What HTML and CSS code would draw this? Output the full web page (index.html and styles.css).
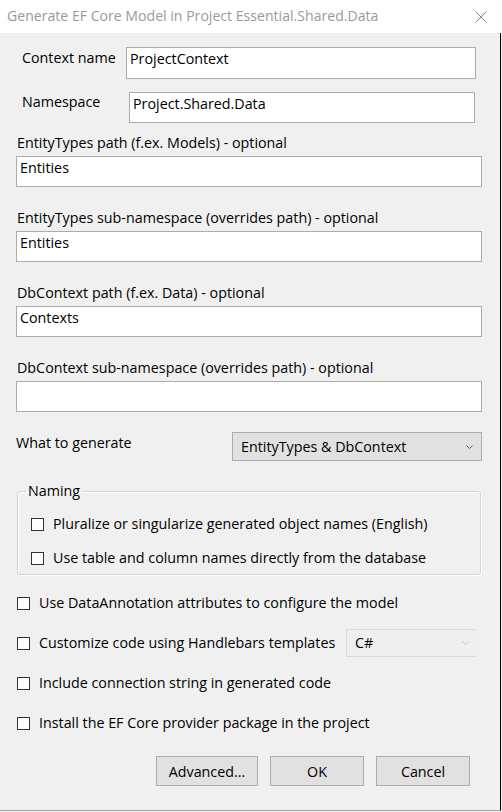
FILE: index.html
```html
<!DOCTYPE html>
<html lang="en">
<head>
<meta charset="utf-8">
<title>Generate EF Core Model</title>
<link rel="stylesheet" href="styles.css">
</head>
<body>
<header class="titlebar">
  <span class="title">Generate EF Core Model in Project Essential.Shared.Data</span>
  <svg class="close" width="12" height="12" viewBox="0 0 12 12"><path d="M0.5 0.5 L11.5 11.5 M11.5 0.5 L0.5 11.5" stroke="#8a8a8a" stroke-width="1" fill="none"/></svg>
</header>
<main class="client">
  <div class="row row-name">
    <span class="lbl-inline lbl-name">Context name</span>
    <div class="textbox tb-name">ProjectContext</div>
  </div>
  <div class="row row-ns">
    <span class="lbl-inline lbl-ns">Namespace</span>
    <div class="textbox tb-ns">Project.Shared.Data</div>
  </div>
  <div class="field field-first">
    <div class="lbl">EntityTypes path (f.ex. Models) - optional</div>
    <div class="textbox tb-wide">Entities</div>
  </div>
  <div class="field">
    <div class="lbl">EntityTypes sub-namespace (overrides path) - optional</div>
    <div class="textbox tb-wide">Entities</div>
  </div>
  <div class="field">
    <div class="lbl">DbContext path (f.ex. Data) - optional</div>
    <div class="textbox tb-wide">Contexts</div>
  </div>
  <div class="field">
    <div class="lbl">DbContext sub-namespace (overrides path) - optional</div>
    <div class="textbox tb-wide"></div>
  </div>
  <div class="row row-what">
    <span class="lbl-inline lbl-what">What to generate</span>
    <div class="combo combo-what">
      <span>EntityTypes &amp; DbContext</span>
      <svg class="chev" width="7" height="4" viewBox="0 0 7 4"><path d="M0.5 0.5 L3.5 3.5 L6.5 0.5" stroke="#606060" stroke-width="1" fill="none"/></svg>
    </div>
  </div>
  <fieldset class="group">
    <legend>Naming</legend>
    <div class="check check-first"><span class="box"></span><span>Pluralize or singularize generated object names (English)</span></div>
    <div class="check check-second"><span class="box"></span><span>Use table and column names directly from the database</span></div>
  </fieldset>
  <div class="check outer c1"><span class="box"></span><span>Use DataAnnotation attributes to configure the model</span></div>
  <div class="check outer c2">
    <span class="box"></span><span class="ctext">Customize code using Handlebars templates</span>
    <div class="combo combo-lang">
      <span>C#</span>
      <svg class="chev" width="7" height="4" viewBox="0 0 7 4"><path d="M0.5 0.5 L3.5 3.5 L6.5 0.5" stroke="#c4c4c4" stroke-width="1" fill="none"/></svg>
    </div>
  </div>
  <div class="check outer c3"><span class="box"></span><span>Include connection string in generated code</span></div>
  <div class="check outer c4"><span class="box"></span><span>Install the EF Core provider package in the project</span></div>
  <div class="buttons">
    <button class="btn btn-adv">Advanced...</button>
    <button class="btn btn-ok">OK</button>
    <button class="btn btn-cancel">Cancel</button>
  </div>
</main>
</body>
</html>
```
FILE: styles.css
```css
html, body {
  margin: 0;
  padding: 0;
}
body {
  width: 502px;
  height: 812px;
  overflow: hidden;
  background: #f0f0f0;
  font-family: "Open Sans", "Noto Sans", sans-serif;
  font-size: 14.3px;
  color: #000;
}
.titlebar {
  height: 33px;
  background: #fff;
  display: flex;
  align-items: center;
  justify-content: space-between;
  padding: 0 15px 0 7px;
  box-sizing: border-box;
}
.title {
  color: #9a9a9a;
  font-size: 14.1px;
  line-height: 20px;
  margin-top: -1px;
  white-space: nowrap;
}
.close {
  display: block;
}
.client {
  width: 501px;
  height: 778px;
  box-sizing: border-box;
  border-right: 1px solid #000;
  border-bottom: 1px solid #a3a3a3;
  overflow: hidden;
}
.row {
  display: flex;
  align-items: flex-start;
}
.row-name {
  margin-top: 14px;
  padding-left: 22px;
}
.row-ns {
  margin-top: 13px;
  padding-left: 22px;
}
.lbl-inline {
  line-height: 20px;
  padding-top: 1px;
  white-space: nowrap;
}
.lbl-name { width: 104px; }
.lbl-ns { width: 107px; padding-top: 0; }
.textbox {
  box-sizing: border-box;
  background: #fff;
  border: 1px solid #acacac;
  line-height: 20px;
  padding: 1px 3px 0;
  white-space: nowrap;
}
.tb-name { width: 350px; height: 32px; }
.tb-ns { width: 346px; height: 31px; }
.field {
  margin-top: 21px;
  padding-left: 16px;
}
.field-first { margin-top: 10px; }
.lbl {
  line-height: 20px;
  margin: 0 0 3px 1px;
  white-space: nowrap;
}
.tb-wide { width: 466px; height: 31px; }
.row-what {
  margin-top: 20px;
  padding-left: 16px;
}
.lbl-what { width: 216px; }
.combo {
  box-sizing: border-box;
  display: flex;
  align-items: center;
  justify-content: space-between;
  white-space: nowrap;
}
.combo-what {
  width: 250px;
  height: 29px;
  background: #e1e1e1;
  border: 1px solid #adadad;
  padding: 0 8px 0 8px;
}
.chev { display: block; }
.group {
  margin: 20px 0 0 17px;
  width: 464px;
  box-sizing: border-box;
  padding: 0 13px 6px;
  border: 1px solid #d5d5d5;
  border-radius: 3px;
  box-shadow: 1px 1px 0 #fff, inset 1px 1px 0 #fff;
}
.group legend {
  padding: 0 2px;
  margin-left: -5px;
  line-height: 20px;
}
.check {
  display: flex;
  align-items: center;
  line-height: 20px;
  white-space: nowrap;
}
.box {
  width: 13px;
  height: 13px;
  box-sizing: border-box;
  border: 1px solid #333;
  background: #fff;
  margin-right: 9px;
  flex: none;
}
.check-first { margin-top: 13px; }
.check-second { margin-top: 14px; }
.outer { padding-left: 17px; }
.c1 { margin-top: 18px; }
.c2 { margin-top: 16px; }
.c3 { margin-top: 16px; }
.c4 { margin-top: 20px; }
.ctext { width: 307px; }
.combo-lang {
  width: 130px;
  height: 28px;
  background: #efefef;
  border: 1px solid #d9d9d9;
  border-right: none;
  padding: 0 7px 0 8px;
  color: #000;
}
.buttons {
  display: flex;
  justify-content: flex-end;
  gap: 12px;
  margin-top: 23px;
  padding-right: 30px;
}
.btn {
  box-sizing: border-box;
  height: 30px;
  background: #e1e1e1;
  border: 1px solid #adadad;
  font-family: inherit;
  font-size: inherit;
  color: #000;
  padding: 0;
  margin: 0;
}
.btn-adv { width: 102px; }
.btn-ok { width: 94px; }
.btn-cancel { width: 94px; }
```
